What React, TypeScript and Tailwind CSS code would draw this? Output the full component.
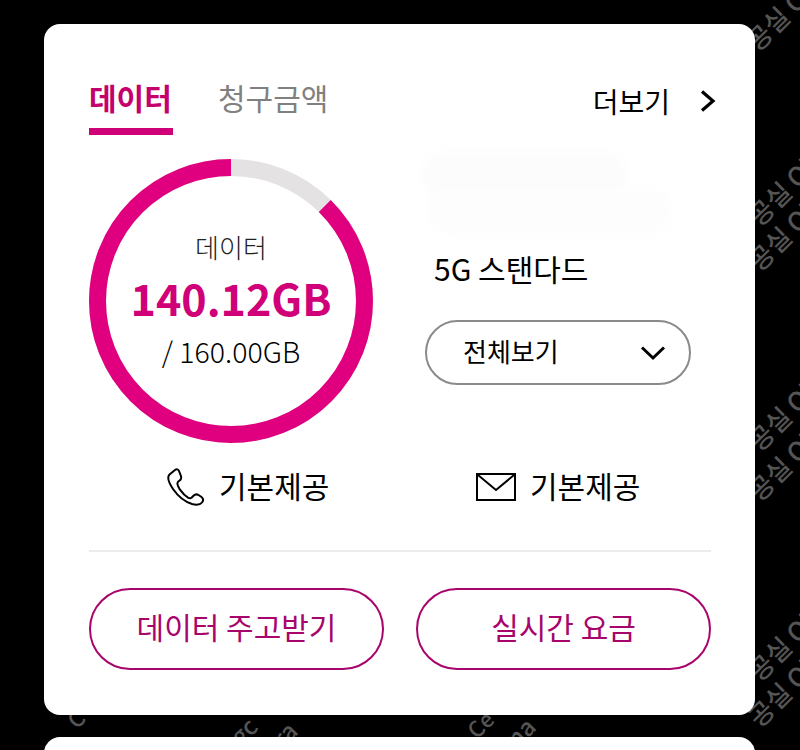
const font = { fontFamily: '"Noto Sans CJK KR", "Noto Sans", sans-serif' };

function Ring() {
  const r = 133.5;
  const c = 2 * Math.PI * r;
  const used = 0.8757;
  return (
    <svg width="284" height="284" viewBox="0 0 284 284" className="block">
      <circle cx="142" cy="142" r={r} fill="none" stroke="#e4e2e3" strokeWidth="17" />
      <circle
        cx="142"
        cy="142"
        r={r}
        fill="none"
        stroke="#e0007f"
        strokeWidth="17"
        strokeDasharray={`${c * used} ${c}`}
        transform="rotate(-90 142 142) scale(1 -1) translate(0 -284)"
      />
    </svg>
  );
}

const marks: [string, number, number, number][] = [
  ["공실 Ol", 750, 32, 26],
  ["공실 Ol", 752, 207, 26],
  ["공실 Ol", 752, 252, 26],
  ["공실 Ol", 752, 432, 26],
  ["공실 Ol", 752, 482, 26],
  ["공실 Ol", 752, 662, 26],
  ["공실 Ol", 752, 708, 26],
  ["C", 70, 712, 22],
  ["gc", 234, 728, 24],
  ["ra", 276, 730, 24],
  ["Ce", 470, 722, 22],
  ["na", 510, 730, 24],
];

export default function App() {
  return (
    <div className="relative h-[750px] w-[800px] overflow-hidden bg-black" style={font}>
      {marks.map(([t, x, y, s], i) => (
        <span
          key={i}
          className="absolute origin-left -rotate-45 font-medium leading-none whitespace-nowrap text-[#555555]"
          style={{ left: x, top: y, fontSize: s }}
        >
          {t}
        </span>
      ))}
      <div className="relative pl-[44px] pt-[24px]">
        <div className="relative flex h-[691px] w-[711px] flex-col rounded-[16px] bg-white pl-[45px] pr-[44px] pt-[50px]">
          <div className="absolute left-[378px] top-[128px] h-[44px] w-[205px] rounded-[24px] bg-[#fcfcfc] blur-[5px]" />
          <div className="absolute left-[384px] top-[166px] h-[44px] w-[245px] rounded-[24px] bg-[#fdfdfd] blur-[5px]" />
          <div className="flex h-[61px] items-start justify-between">
            <div className="flex gap-[45px]">
              <div className="flex h-[61px] w-[84px] flex-col justify-between">
                <span className="text-[30px] font-bold leading-[46px] whitespace-nowrap text-[#c4006c]">데이터</span>
                <span className="block h-[7px] w-[84px] bg-[#cf0077]" />
              </div>
              <span className="text-[30px] font-normal leading-[46px] whitespace-nowrap text-[#808080]">청구금액</span>
            </div>
            <div className="flex h-[54px] items-center">
              <span className="text-[28px] font-normal leading-[40px] text-black">더보기</span>
              <svg width="18" height="24" viewBox="0 0 18 24" className="ml-[29px] mr-[-6px]" fill="none" stroke="#000" strokeWidth="3.2">
                <path d="M3 2.500 14 12 3 21.500" />
              </svg>
            </div>
          </div>

          <div className="mt-[24px] flex">
            <div className="relative h-[284px] w-[284px]">
              <Ring />
              <div className="absolute inset-0 flex flex-col items-center pt-[66px]">
                <span className="text-[26px] font-light leading-[44px] text-[#222]">데이터</span>
                <span className="mt-[-2px] text-[43px] font-bold leading-[60px] text-[#cf0078]">140.12GB</span>
                <span className="text-[28.500px] font-light leading-[48px] text-black">/ 160.00GB</span>
              </div>
            </div>
            <div className="ml-[52px] flex w-[266px] flex-col">
              <span className="ml-[9px] mt-[84px] text-[30px] font-normal leading-[50px] text-black">5G 스탠다드</span>
              <div className="mt-[27px] flex h-[65px] items-center justify-between rounded-full border-2 border-[#8a8a8a] pl-[36px] pr-[23px]">
                <span className="mt-[-5px] text-[26px] font-normal text-black">전체보기</span>
                <svg width="26" height="16" viewBox="0 0 26 16" fill="none" stroke="#000" strokeWidth="3">
                  <path d="M2 2.500 13 13 24 2.500" />
                </svg>
              </div>
            </div>
          </div>

          <div className="mt-[20px] flex h-[48px] items-center">
            <div className="ml-[78px] flex w-[309px] items-center">
              <svg width="38" height="38" viewBox="0 0 38 38" fill="none" stroke="#000" strokeWidth="2" strokeLinejoin="round">
                <path d="M8 2 2.500 6.500C0 9 2 15 6 21c4.500 6.500 11 12.500 19 15 4 1 8 1 10-1.500 1.500-2 1.500-4-.5-5.500l-3-2c-2-1.200-3.500-.7-5 .7l-2 2c-1 .8-2 .8-3.500 0-3-1.800-5.500-4.500-8-8-1.500-2.500-3-5.500-2.500-7 .3-1 1-1.500 2-2 1.500-1 2-2.500 1.500-4.500L12 3c-.7-1.800-2.500-2.200-4-1z" />
              </svg>
              <span className="ml-[14px] mt-[-3px] text-[30px] font-normal whitespace-nowrap text-black">기본제공</span>
            </div>
            <svg width="40" height="28" viewBox="0 0 40 28" fill="none" stroke="#000" strokeWidth="2">
              <rect x="1" y="1" width="38" height="26" />
              <path d="M2 2 20 17 38 2" />
            </svg>
            <span className="ml-[14px] mt-[-3px] text-[30px] font-normal whitespace-nowrap text-black">기본제공</span>
          </div>

          <div className="mt-[39px] h-[2px] bg-[#ececec]" />

          <div className="mt-[36px] flex justify-between">
            <div className="flex h-[82px] w-[295px] items-center justify-center rounded-full border-2 border-[#a8056c] pb-[6px] text-[30px] text-[#a8056c]">
              데이터 주고받기
            </div>
            <div className="flex h-[82px] w-[295px] items-center justify-center rounded-full border-2 border-[#a8056c] pb-[6px] text-[30px] text-[#a8056c]">
              실시간 요금
            </div>
          </div>
        </div>
        <div className="mt-[22px] h-[100px] w-[711px] rounded-[16px] bg-white" />
      </div>
    </div>
  );
}
